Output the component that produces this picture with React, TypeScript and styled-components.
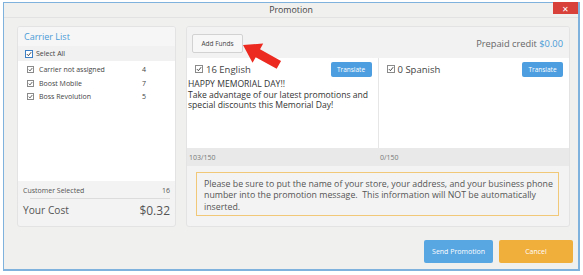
import React from 'react'
import styled, { createGlobalStyle } from 'styled-components'

const GlobalStyle = createGlobalStyle`
	html, body {
		margin: 0;
		padding: 0;
		background: #ffffff;
		font-family: "Open Sans", "Noto Sans", sans-serif;
	}
`

const Page = styled.div`
	width: 583px;
	height: 275px;
	padding: 2px 0 0 3px;
	box-sizing: border-box;
`

const Window = styled.div`
	position: relative;
	width: 577px;
	height: 269px;
	box-sizing: border-box;
	border: 1px solid #7fb2dc;
	border-right-width: 2px;
	border-bottom-width: 2px;
	background: #f0f0ef;
	display: flex;
	flex-direction: column;
`

const TitleBar = styled.div`
	height: 14px;
	position: relative;
	display: flex;
	align-items: center;
	justify-content: center;
	border-bottom: 1px solid #e2e2e2;
	font-size: 8.8px;
	color: #444;
`

const CloseButton = styled.div`
	position: absolute;
	top: -1px;
	right: 0;
	width: 25px;
	height: 12px;
	background: #d8403a;
	color: #fff;
	font-size: 8px;
	display: flex;
	align-items: center;
	justify-content: center;
`

const Body = styled.div`
	display: flex;
	gap: 10px;
	padding: 8px 7px 0 13px;
`

const Panel = styled.div<{ $width: number }>`
	width: ${p => p.$width}px;
	height: 201px;
	box-sizing: border-box;
	border: 1px solid #e3e3e3;
	border-radius: 3px;
	background: #f3f3f3;
	display: flex;
	flex-direction: column;
	overflow: hidden;
`

const PanelHeader = styled.div`
	height: 19px;
	display: flex;
	align-items: center;
	padding-left: 6px;
	font-size: 9px;
	color: #4a9bd6;
	background: #f6f6f6;
`

const SelectAllRow = styled.div`
	height: 15px;
	display: flex;
	align-items: center;
	gap: 3px;
	padding-left: 7px;
	font-size: 7px;
	color: #444;
	background: #f1f1f1;
`

const CarrierList = styled.div`
	background: #fff;
	height: 120px;
	padding-top: 2px;
	box-sizing: border-box;
`

const CarrierRow = styled.div`
	height: 13.5px;
	display: flex;
	align-items: center;
	padding-left: 9px;
	font-size: 7px;
	color: #444;
`

const CarrierName = styled.span`
	margin-left: 5px;
	width: 103px;
`

const Summary = styled.div`
	flex: 1;
	padding: 4px 5px 0 5px;
	color: #555;
`

const SummaryRow = styled.div<{ $big?: boolean }>`
	display: flex;
	justify-content: space-between;
	align-items: center;
	font-size: ${p => (p.$big ? '10.2px' : '7px')};
	height: ${p => (p.$big ? '22px' : '10px')};
`

const Money = styled.span`
	font-size: 12px;
`

const Rule = styled.div`
	height: 1px;
	background: #dcdcdc;
	margin: 3px 0 0 7px;
`

const TopBar = styled.div`
	height: 31px;
	display: flex;
	align-items: center;
	justify-content: space-between;
	padding: 0 6px 0 5px;
	background: #f2f2f2;
`

const FundsButton = styled.div`
	width: 51px;
	height: 19px;
	box-sizing: border-box;
	border: 1px solid #d2d2d2;
	border-radius: 2px;
	background: #f7f7f7;
	display: flex;
	align-items: center;
	justify-content: center;
	font-size: 6.5px;
	color: #444;
	margin-top: 1px;
`

const Credit = styled.div`
	font-size: 9.3px;
	color: #666;
	margin-top: 1px;

	span {
		color: #4a9bd6;
	}
`

const Columns = styled.div`
	display: flex;
	height: 90px;
	background: #fff;
`

const Column = styled.div<{ $divider?: boolean }>`
	flex: 1;
	min-width: 0;
	border-left: ${p => (p.$divider ? '1px solid #e6e6e6' : 'none')};
	padding: 3px 6px 0 1px;
`

const ColumnHead = styled.div`
	display: flex;
	align-items: center;
	justify-content: space-between;
	height: 16px;
	padding-left: 7px;
`

const Language = styled.div`
	display: flex;
	align-items: center;
	gap: 3px;
	font-size: 9.5px;
	color: #444;
`

const TranslateButton = styled.div`
	width: 41px;
	height: 15px;
	border-radius: 2px;
	background: #4d9ee0;
	color: #fff;
	font-size: 6.5px;
	display: flex;
	align-items: center;
	justify-content: center;
`

const Message = styled.div`
	font-size: 8.6px;
	line-height: 10.5px;
	white-space: nowrap;
	color: #333;
	margin-top: 2px;
`

const Counts = styled.div`
	display: flex;
	height: 18px;
	background: #e9e9e9;
`

const Count = styled.div`
	flex: 1;
	display: flex;
	align-items: center;
	padding-left: 2px;
	font-size: 7px;
	color: #777;
`

const Notice = styled.div`
	margin: 6px 10px 0 9px;
	height: 44px;
	box-sizing: border-box;
	border: 1px solid #f1c877;
	padding: 6px 4px 0 7px;
	font-size: 8.8px;
	line-height: 11.3px;
	white-space: nowrap;
	overflow: hidden;
	color: #555;
`

const Footer = styled.div`
	flex: 1;
	display: flex;
	justify-content: flex-end;
	align-items: flex-start;
	gap: 6px;
	padding: 13px 5px 0 0;
`

const ActionButton = styled.div<{ $tone: 'blue' | 'orange'; $width: number }>`
	width: ${p => p.$width}px;
	height: 23px;
	border-radius: 2px;
	background: ${p => (p.$tone === 'blue' ? '#58a6e2' : '#f0ae3a')};
	color: #fff;
	font-size: 7px;
	display: flex;
	align-items: center;
	justify-content: center;
`

const BoxWrap = styled.span<{ $blue?: boolean; $size: number }>`
	display: inline-flex;
	width: ${p => p.$size}px;
	height: ${p => p.$size}px;
	box-sizing: border-box;
	border: 1px solid ${p => (p.$blue ? '#3d7fc4' : '#8a8a8a')};
	background: #fff;
	align-items: center;
	justify-content: center;
`

const Arrow = styled.svg`
	position: absolute;
	left: 0;
	top: 0;
	pointer-events: none;
`

function Check({ blue, size = 7 }: { blue?: boolean; size?: number }) {
	return <BoxWrap $blue={blue} $size={size}>
		<svg width={size - 2} height={size - 2} viewBox="0 0 10 10">
			<path d="M1.5 5.2 L4 7.8 L8.6 2" fill="none" stroke="#333" strokeWidth="1.5" />
		</svg>
	</BoxWrap>
}

const carriers = [
	{ name: 'Carrier not assigned', count: 4 },
	{ name: 'Boost Mobile', count: 7 },
	{ name: 'Boss Revolution', count: 5 },
]

export default function App() {
	return <Page>
		<GlobalStyle />
		<Window>
			<TitleBar>
				Promotion
				<CloseButton>✕</CloseButton>
			</TitleBar>
			<Body>
				<Panel $width={159}>
					<PanelHeader>Carrier List</PanelHeader>
					<SelectAllRow><Check blue size={8} />Select All</SelectAllRow>
					<CarrierList>
						{carriers.map(c => <CarrierRow key={c.name}>
							<Check size={7} />
							<CarrierName>{c.name}</CarrierName>
							<span>{c.count}</span>
						</CarrierRow>)}
					</CarrierList>
					<Summary>
						<SummaryRow><span>Customer Selected</span><span>16</span></SummaryRow>
						<Rule />
						<SummaryRow $big><span>Your Cost</span><Money>$0.32</Money></SummaryRow>
					</Summary>
				</Panel>
				<Panel $width={384}>
					<TopBar>
						<FundsButton>Add Funds</FundsButton>
						<Credit>Prepaid credit <span>$0.00</span></Credit>
					</TopBar>
					<Columns>
						<Column>
							<ColumnHead>
								<Language><Check size={8} />16 English</Language>
								<TranslateButton>Translate</TranslateButton>
							</ColumnHead>
							<Message>
								HAPPY MEMORIAL DAY!!<br />
								Take advantage of our latest promotions and<br />
								special discounts this Memorial Day!
							</Message>
						</Column>
						<Column $divider>
							<ColumnHead>
								<Language><Check size={8} />0 Spanish</Language>
								<TranslateButton>Translate</TranslateButton>
							</ColumnHead>
						</Column>
					</Columns>
					<Counts>
						<Count>103/150</Count>
						<Count>0/150</Count>
					</Counts>
					<Notice>
						Please be sure to put the name of your store, your address, and your business phone<br />
						number into the promotion message.&nbsp; This information will NOT be automatically<br />
						inserted.
					</Notice>
				</Panel>
			</Body>
			<Footer>
				<ActionButton $tone="blue" $width={69}>Send Promotion</ActionButton>
				<ActionButton $tone="orange" $width={74}>Cancel</ActionButton>
			</Footer>
			<Arrow width="577" height="269" viewBox="0 0 577 269">
				<polygon
					transform="translate(239 42) rotate(29)"
					points="0,0 17,-11 17,-4.5 41,-4.5 41,4.5 17,4.5 17,11"
					fill="#ec2a1f"
				/>
			</Arrow>
		</Window>
	</Page>
}
